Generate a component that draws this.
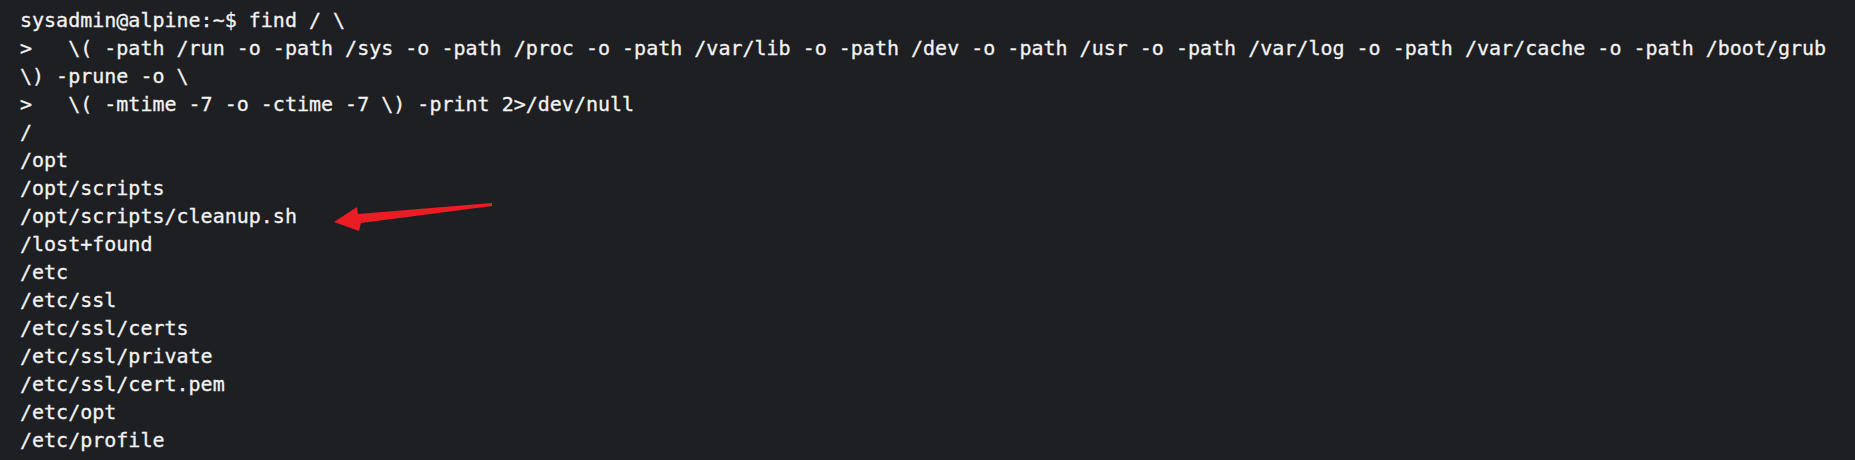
const lines = [
  "sysadmin@alpine:~$ find / \\",
  ">   \\( -path /run -o -path /sys -o -path /proc -o -path /var/lib -o -path /dev -o -path /usr -o -path /var/log -o -path /var/cache -o -path /boot/grub",
  "\\) -prune -o \\",
  ">   \\( -mtime -7 -o -ctime -7 \\) -print 2>/dev/null",
  "/",
  "/opt",
  "/opt/scripts",
  "/opt/scripts/cleanup.sh",
  "/lost+found",
  "/etc",
  "/etc/ssl",
  "/etc/ssl/certs",
  "/etc/ssl/private",
  "/etc/ssl/cert.pem",
  "/etc/opt",
  "/etc/profile",
];

// red annotation arrow pointing at cleanup.sh
const Arrow = () => (
  <svg
    className="absolute left-0 top-0 pointer-events-none"
    width="1855"
    height="460"
    viewBox="0 0 1855 460"
  >
    <polygon
      points="334,222 357,207 358,214 492,203 492,206 361,223 359,231"
      fill="#ec1c24"
    />
  </svg>
);

export default function App() {
  return (
    <div className="relative w-[1855px] h-[460px] overflow-hidden bg-[#1e1f22]">
      <div className="pt-[6px] pl-[20px] text-[20px] leading-[28px] text-[#f2f2f2] whitespace-pre font-['DejaVu_Sans_Mono','Liberation_Mono',monospace] [-webkit-text-stroke:0.3px_#f2f2f2]">
        {lines.map((l, i) => (
          <div key={i}>{l}</div>
        ))}
      </div>
      <Arrow />
    </div>
  );
}
